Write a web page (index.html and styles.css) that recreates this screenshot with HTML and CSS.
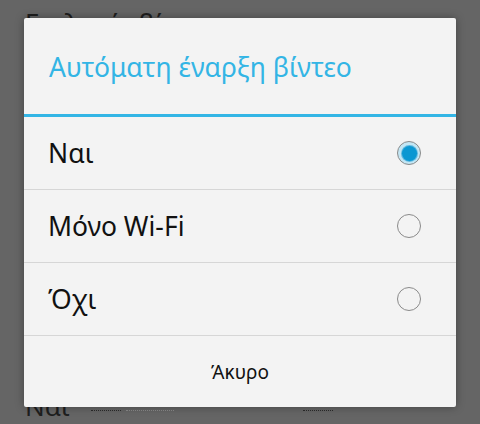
FILE: index.html
```html
<!DOCTYPE html>
<html lang="el">
<head>
    <meta charset="UTF-8">
    <title>Αυτόματη έναρξη βίντεο</title>
    <link rel="stylesheet" href="styles.css">
</head>
<body>
    <!-- Settings page behind the dialog -->
    <div class="page">
        <div class="page-title">Επιλογές βίντεο</div>
        <div class="page-bottom">
            <span class="page-value">Ναι</span>
            <span class="dots"></span>
            <span class="dots light"></span>
            <span class="dots far"></span>
        </div>
    </div>

    <!-- Dim overlay + dialog -->
    <div class="overlay">
        <div class="dialog">
            <div class="dialog-title">Αυτόματη έναρξη βίντεο</div>
            <ul class="options">
                <li class="option">
                    <span>Ναι</span>
                    <span class="radio checked"></span>
                </li>
                <li class="option">
                    <span>Μόνο Wi-Fi</span>
                    <span class="radio"></span>
                </li>
                <li class="option">
                    <span>Όχι</span>
                    <span class="radio"></span>
                </li>
            </ul>
            <div class="dialog-button">Άκυρο</div>
        </div>
    </div>
</body>
</html>
```

FILE: styles.css
```css
/* General */
body {
    margin: 0;
    font-family: 'Noto Sans', 'Open Sans', sans-serif;
    background-color: #656565;
    width: 480px;
    height: 424px;
    overflow: hidden;
    position: relative;
}

/* Page behind */
.page {
    height: 424px;
    display: flex;
    flex-direction: column;
    justify-content: space-between;
    padding: 0 25px;
}

.page-title {
    font-size: 26px;
    color: #1e1e1e;
    margin-top: 4px;
}

.page-bottom {
    display: flex;
    align-items: flex-end;
    height: 26px;
    margin-bottom: 5px;
}

.page-value {
    font-size: 26px;
    color: #1e1e1e;
    line-height: 26px;
    width: 66px;
}

.dots {
    width: 30px;
    border-bottom: 1px dotted #2a2a2a;
    margin-bottom: 8px;
}

.dots.light {
    width: 48px;
    margin-left: 5px;
    border-bottom-color: #8a8a8a;
}

.dots.far {
    margin-left: 129px;
}

/* Dialog */
.overlay {
    position: absolute;
    top: 18px;
    left: 24px;
}

.dialog {
    width: 432px;
    background-color: #f3f3f3;
    box-shadow: 0 0 8px rgba(0,0,0,0.35);
    border-radius: 2px;
}

.dialog-title {
    height: 65px;
    padding: 31px 0 0 25px;
    font-size: 26.5px;
    line-height: 36px;
    color: #33b5e5;
    border-bottom: 3px solid #33b5e5;
}

.options {
    list-style: none;
    margin: 0;
    padding: 0;
}

.option {
    height: 72px;
    display: flex;
    align-items: center;
    justify-content: space-between;
    padding: 0 35px 0 24px;
    font-size: 26.5px;
    color: #111;
    border-bottom: 1px solid #d6d6d6;
}

/* Radio buttons */
.radio {
    width: 22px;
    height: 22px;
    border: 1.5px solid #8a8a8a;
    border-radius: 50%;
    display: flex;
    align-items: center;
    justify-content: center;
}

.radio.checked {
    background-color: #c3e6f4;
}

.radio.checked::after {
    content: "";
    width: 15px;
    height: 15px;
    border-radius: 50%;
    background-color: #0a97d2;
    box-shadow: 0 0 0 1px #5fb8df;
}

.dialog-button {
    height: 71px;
    display: flex;
    align-items: center;
    justify-content: center;
    font-size: 19px;
    color: #111;
}
```
